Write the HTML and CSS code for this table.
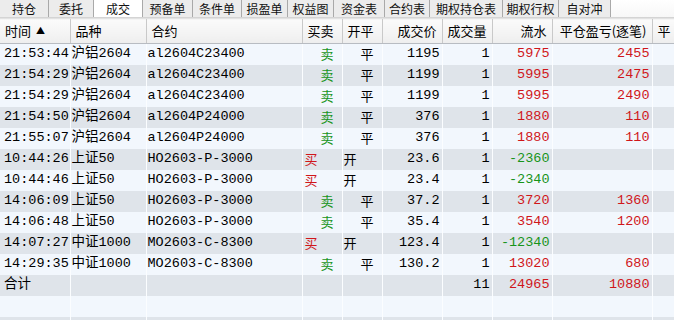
FILE: index.html
```html
<!DOCTYPE html>
<html lang="zh">
<head>
<meta charset="utf-8">
<link rel="stylesheet" href="styles.css">
</head>
<body>
<div class="tabs">
  <div class="tab w49">持仓</div>
  <div class="tab w45">委托</div>
  <div class="tab w49 active">成交</div>
  <div class="tab w50">预备单</div>
  <div class="tab w49">条件单</div>
  <div class="tab w46">损盈单</div>
  <div class="tab w46">权益图</div>
  <div class="tab w51">资金表</div>
  <div class="tab w45">合约表</div>
  <div class="tab w73">期权持仓表</div>
  <div class="tab w56">期权行权</div>
  <div class="tab w52">自对冲</div>
</div>
<div class="view">
<table class="grid">
  <colgroup>
    <col class="c1"><col class="c2"><col class="c3"><col class="c4"><col class="c5">
    <col class="c6"><col class="c7"><col class="c8"><col class="c9"><col class="c10">
  </colgroup>
  <thead>
    <tr>
      <th class="l">时间 <span class="sort">▲</span></th>
      <th class="l">品种</th>
      <th class="l">合约</th>
      <th class="l">买卖</th>
      <th class="l">开平</th>
      <th class="r">成交价</th>
      <th class="r">成交量</th>
      <th class="r">流水</th>
      <th class="r">平仓盈亏(逐笔)</th>
      <th class="l">平</th>
    </tr>
  </thead>
  <tbody>
    <tr><td class="time">21:53:44</td><td class="mono">沪铝2604</td><td class="mono">al2604C23400</td><td class="sell">卖</td><td class="close">平</td><td class="num">1195</td><td class="num">1</td><td class="num red">5975</td><td class="num red">2455</td><td></td></tr>
    <tr><td class="time">21:54:29</td><td class="mono">沪铝2604</td><td class="mono">al2604C23400</td><td class="sell">卖</td><td class="close">平</td><td class="num">1199</td><td class="num">1</td><td class="num red">5995</td><td class="num red">2475</td><td></td></tr>
    <tr><td class="time">21:54:29</td><td class="mono">沪铝2604</td><td class="mono">al2604C23400</td><td class="sell">卖</td><td class="close">平</td><td class="num">1199</td><td class="num">1</td><td class="num red">5995</td><td class="num red">2490</td><td></td></tr>
    <tr><td class="time">21:54:50</td><td class="mono">沪铝2604</td><td class="mono">al2604P24000</td><td class="sell">卖</td><td class="close">平</td><td class="num">376</td><td class="num">1</td><td class="num red">1880</td><td class="num red">110</td><td></td></tr>
    <tr><td class="time">21:55:07</td><td class="mono">沪铝2604</td><td class="mono">al2604P24000</td><td class="sell">卖</td><td class="close">平</td><td class="num">376</td><td class="num">1</td><td class="num red">1880</td><td class="num red">110</td><td></td></tr>
    <tr><td class="time">10:44:26</td><td class="mono">上证50</td><td class="mono">HO2603-P-3000</td><td class="buy">买</td><td class="open">开</td><td class="num">23.6</td><td class="num">1</td><td class="num green">-2360</td><td class="num"></td><td></td></tr>
    <tr><td class="time">10:44:46</td><td class="mono">上证50</td><td class="mono">HO2603-P-3000</td><td class="buy">买</td><td class="open">开</td><td class="num">23.4</td><td class="num">1</td><td class="num green">-2340</td><td class="num"></td><td></td></tr>
    <tr><td class="time">14:06:09</td><td class="mono">上证50</td><td class="mono">HO2603-P-3000</td><td class="sell">卖</td><td class="close">平</td><td class="num">37.2</td><td class="num">1</td><td class="num red">3720</td><td class="num red">1360</td><td></td></tr>
    <tr><td class="time">14:06:48</td><td class="mono">上证50</td><td class="mono">HO2603-P-3000</td><td class="sell">卖</td><td class="close">平</td><td class="num">35.4</td><td class="num">1</td><td class="num red">3540</td><td class="num red">1200</td><td></td></tr>
    <tr><td class="time">14:07:27</td><td class="mono">中证1000</td><td class="mono">MO2603-C-8300</td><td class="buy">买</td><td class="open">开</td><td class="num">123.4</td><td class="num">1</td><td class="num green">-12340</td><td class="num"></td><td></td></tr>
    <tr><td class="time">14:29:35</td><td class="mono">中证1000</td><td class="mono">MO2603-C-8300</td><td class="sell">卖</td><td class="close">平</td><td class="num">130.2</td><td class="num">1</td><td class="num red">13020</td><td class="num red">680</td><td></td></tr>
    <tr><td class="time">合计</td><td></td><td></td><td></td><td></td><td></td><td class="num">11</td><td class="num red">24965</td><td class="num red">10880</td><td></td></tr>
    <tr><td></td><td></td><td></td><td></td><td></td><td></td><td></td><td></td><td></td><td></td></tr>
    <tr><td></td><td></td><td></td><td></td><td></td><td></td><td></td><td></td><td></td><td></td></tr>
  </tbody>
</table>
</div>
</body>
</html>
```

FILE: styles.css
```css
html, body {
  margin: 0;
  padding: 0;
  background: #f2f7fd;
  overflow: hidden;
}
body {
  width: 674px;
  height: 320px;
  font-family: "Noto Sans CJK SC", "Noto Sans", sans-serif;
  color: #000;
}
.tabs {
  display: flex;
  height: 18px;
  background: linear-gradient(#ffffff 0, #f7f7f7 100%);
  border-bottom: 1px solid #d4d4d4;
  box-sizing: border-box;
}
.tab {
  box-sizing: border-box;
  height: 17px;
  line-height: 17px;
  font-size: 12px;
  text-align: center;
  background: #ececec;
  border-right: 1px solid #a9a9a9;
  color: #111;
}
.tab.active {
  background: #ffffff;
}
.w45 { width: 45px; }
.w46 { width: 46px; }
.w49 { width: 49px; }
.w50 { width: 50px; }
.w51 { width: 51px; }
.w52 { width: 52px; }
.w56 { width: 56px; }
.w73 { width: 73px; }

.view {
  height: 302px;
  overflow: hidden;
}
.grid {
  table-layout: fixed;
  border-collapse: collapse;
  width: 674px;
}
.c1 { width: 70px; }
.c2 { width: 76px; }
.c3 { width: 156px; }
.c4 { width: 40px; }
.c5 { width: 40px; }
.c6 { width: 60px; }
.c7 { width: 50px; }
.c8 { width: 60px; }
.c9 { width: 100px; }
.c10 { width: 22px; }

thead th {
  height: 24px;
  padding: 0 5px;
  font-size: 13px;
  line-height: 22px;
  font-weight: normal;
  white-space: nowrap;
  overflow: hidden;
  background: linear-gradient(#fbfbfb, #eeeeee);
  border-left: 1px solid #c9c9c9;
  border-bottom: 1px solid #b8bcc2;
  border-top: 1px solid #e2e2e2;
}
thead th:first-child { border-left: none; }
th.l { text-align: left; }
th.r { text-align: right; }
.sort { font-size: 9px; vertical-align: 2px; margin-left: 2px; }

tbody td {
  height: 21px;
  padding: 0;
  font-size: 13.5px;
  line-height: 20px;
  white-space: nowrap;
  overflow: visible;
  border-left: 1px solid #fbfdff;
  box-sizing: border-box;
  font-family: "Liberation Mono", "Noto Sans CJK SC", monospace;
}
tbody td:first-child { border-left: none; }
tbody tr:nth-child(odd) td { background: #f2f7fd; }
tbody tr:nth-child(even) td { background: #dfe4ea; }

td.time { padding-left: 4px; }
td.mono { padding-left: 1px; }
td.sell { text-align: right; padding-right: 8px; color: #17941a; font-family: "Noto Sans CJK SC", sans-serif; font-size: 13px; }
td.buy { text-align: left; padding-left: 2px; color: #d0161a; font-family: "Noto Sans CJK SC", sans-serif; font-size: 13px; }
td.close { text-align: right; padding-right: 8px; font-family: "Noto Sans CJK SC", sans-serif; font-size: 13px; }
td.open { text-align: left; padding-left: 1px; font-family: "Noto Sans CJK SC", sans-serif; font-size: 13px; }
td.num { text-align: right; padding-right: 2px; }
.red { color: #d0161a; }
.green { color: #17941a; }
```
